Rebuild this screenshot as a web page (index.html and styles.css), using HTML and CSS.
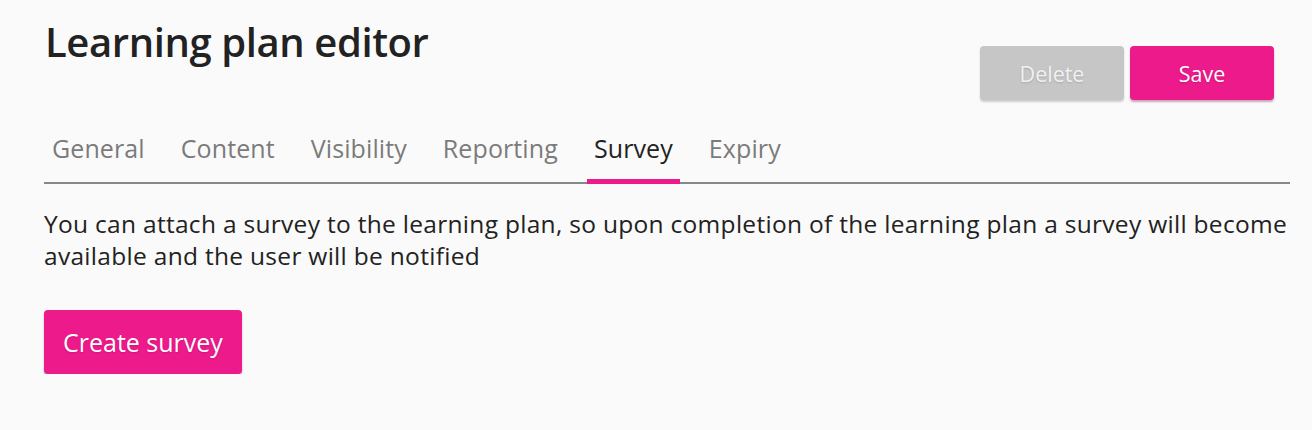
FILE: index.html
```html
<!DOCTYPE html>
<html lang="en">
<head>
    <title>Learning plan editor</title>
    <meta charset="utf-8">
    <link rel="stylesheet" href="styles.css">
</head>
<body>
    <div class="editor">
        <div class="header">
            <h1>Learning plan editor</h1>
            <div class="actions">
                <button class="btn btn-grey">Delete</button>
                <button class="btn btn-pink">Save</button>
            </div>
        </div>

        <div class="tabs">
            <span class="tab">General</span>
            <span class="tab">Content</span>
            <span class="tab">Visibility</span>
            <span class="tab">Reporting</span>
            <span class="tab active">Survey</span>
            <span class="tab">Expiry</span>
        </div>

        <p class="intro">You can attach a survey to the learning plan, so upon completion of the learning plan a survey will become available and the user will be notified</p>

        <button class="btn btn-pink btn-create">Create survey</button>
    </div>
</body>
</html>
```
FILE: styles.css
```css
body {
    margin: 0;
    background-color: #fafafa;
    font-family: "Open Sans", sans-serif;
    color: #222;
}
.editor {
    padding: 0 10px 0 44px;
}
.header {
    display: flex;
    justify-content: space-between;
    align-items: flex-start;
}
h1 {
    margin: 14px 0 0 1px;
    font-size: 40px;
    font-weight: 600;
    letter-spacing: -0.4px;
    color: #222;
}
.actions {
    display: flex;
    gap: 6px;
    margin-top: 46px;
    margin-right: 28px;
}
.btn {
    font-family: inherit;
    border: none;
    border-radius: 4px;
    color: white;
    cursor: pointer;
}
.actions .btn {
    width: 144px;
    height: 54px;
    font-size: 21.5px;
}
.btn-grey {
    background-color: #c6c6c6;
    color: #f1f1f1;
    box-shadow: 0 2px 2px rgba(0,0,0,0.18);
    text-shadow: 0 1px 2px rgba(0,0,0,0.15);
}
.btn-pink {
    background-color: #ec1a8b;
    box-shadow: 0 2px 2px rgba(120,0,60,0.35);
    text-shadow: 0 1px 2px rgba(0,0,0,0.15);
}
.tabs {
    display: flex;
    gap: 22px;
    margin-top: 25px;
    margin-right: 12px;
    padding-left: 1px;
    border-bottom: 2px solid #888;
}
.tab {
    padding: 6px 7px 14px;
    font-size: 25px;
    letter-spacing: 0.1px;
    color: #7b7b7b;
    border-bottom: 5px solid transparent;
    margin-bottom: -2px;
}
.tab.active {
    color: #222;
    border-bottom-color: #ec1a8b;
}
.intro {
    margin: 24px 0 0 0;
    font-size: 24.5px;
    line-height: 32px;
    letter-spacing: 0.3px;
    color: #222;
}
.btn-create {
    display: block;
    margin-top: 38px;
    height: 64px;
    padding: 0 19px;
    font-size: 25px;
}
```
